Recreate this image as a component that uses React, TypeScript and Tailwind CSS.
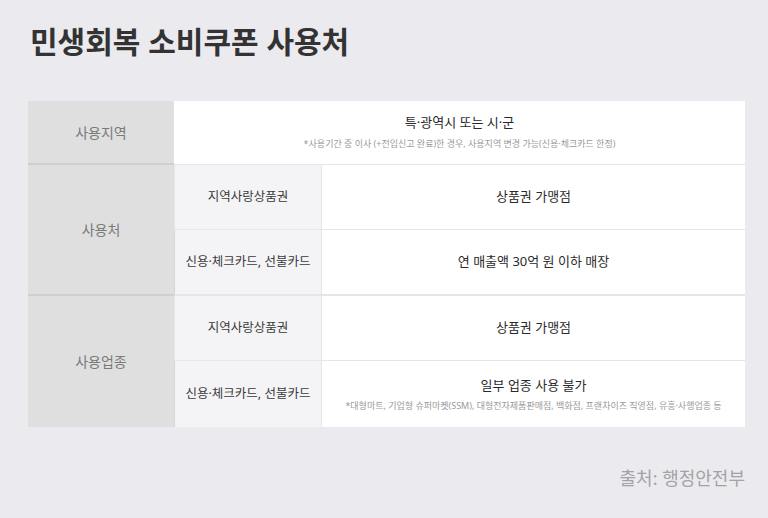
import React from "react"

const font = { fontFamily: '"Noto Sans", "Noto Sans CJK KR", sans-serif' }

function Head({ children, className = "" }: { children: React.ReactNode; className?: string }) {
  return (
    <div className={`flex items-center justify-center bg-[#dfdfdf] text-[14px] text-[#7a7a7a] ${className}`}>
      {children}
    </div>
  )
}

function Sub({ children, className = "" }: { children: React.ReactNode; className?: string }) {
  return (
    <div className={`flex items-center justify-center border-l border-[#d6d6d6] bg-[#f4f4f6] text-[12.5px] text-[#3a3a3a] ${className}`}>
      {children}
    </div>
  )
}

function Cell({ main, note, className = "" }: { main: string; note?: string; className?: string }) {
  return (
    <div className={`flex flex-col items-center justify-center border-l border-[#e6e6e6] bg-white ${className}`}>
      <span className="text-[13px] text-[#2a2a2a]">{main}</span>
      {note && <span className="mt-[3px] text-[9px] text-[#9a9a9a]">{note}</span>}
    </div>
  )
}

export default function App() {
  return (
    <div className="h-[518px] w-[768px] bg-[#ebeaef] px-[28px] pt-[22px]" style={font}>
      <h1 className="pl-[2px] text-[30px] font-bold leading-[40px] text-[#333]">민생회복 소비쿠폰 사용처</h1>

      <div className="mt-[39px] grid w-[717px] grid-cols-[146px_147px_1fr] grid-rows-[64px_65px_66px_65px_66px]">
        <Head className="border-b-2 border-[#cfcfcf]">사용지역</Head>
        <div className="col-span-2 flex flex-col items-center justify-center border-b border-[#e6e6e6] bg-white pb-[2px]">
          <span className="text-[13px] text-[#2a2a2a]">특·광역시 또는 시·군</span>
          <span className="mt-[4px] text-[9px] text-[#9a9a9a]">
            *사용기간 중 이사 (+전입신고 완료)한 경우, 사용지역 변경 가능(신용·체크카드 한정)
          </span>
        </div>

        <Head className="row-span-2 border-b-2 border-[#cfcfcf]">사용처</Head>
        <Sub className="border-b border-[#e6e6e6]">지역사랑상품권</Sub>
        <Cell main="상품권 가맹점" className="border-b border-b-[#e6e6e6]" />
        <Sub className="border-b-2 border-b-[#e6e6e6]">신용·체크카드, 선불카드</Sub>
        <Cell main="연 매출액 30억 원 이하 매장" className="border-b-2 border-b-[#e6e6e6]" />

        <Head className="row-span-2">사용업종</Head>
        <Sub className="border-b border-[#e6e6e6]">지역사랑상품권</Sub>
        <Cell main="상품권 가맹점" className="border-b border-b-[#e6e6e6]" />
        <Sub>신용·체크카드, 선불카드</Sub>
        <Cell
          main="일부 업종 사용 불가"
          note="*대형마트, 기업형 슈퍼마켓(SSM), 대형전자제품판매점, 백화점, 프랜차이즈 직영점, 유흥·사행업종 등"
        />
      </div>

      <div className="mt-[38px] flex w-[717px] justify-end">
        <span className="text-[18px] text-[#a3a3a3]">출처: 행정안전부</span>
      </div>
    </div>
  )
}
